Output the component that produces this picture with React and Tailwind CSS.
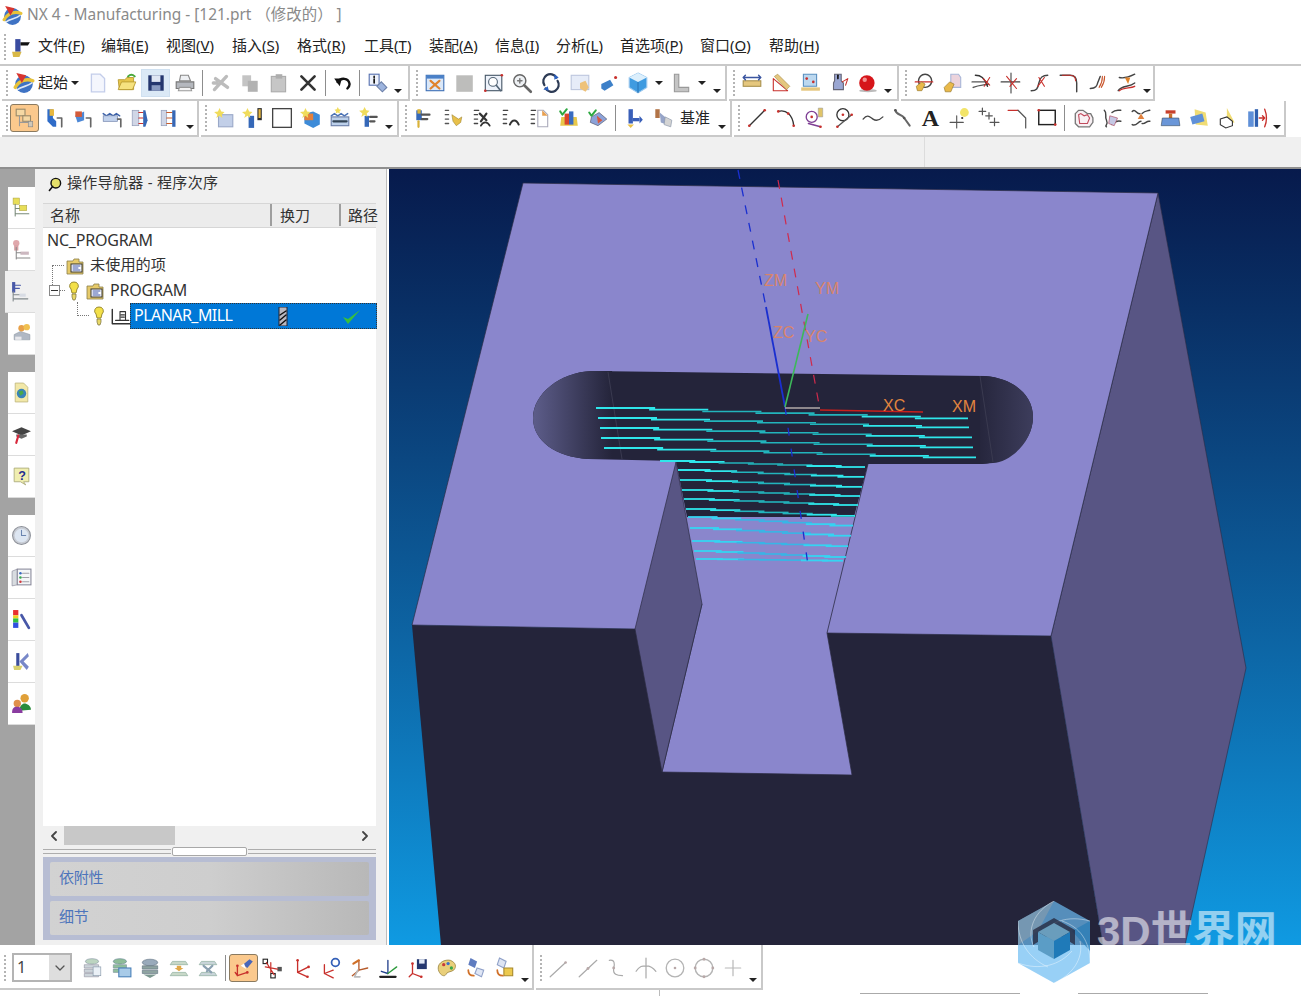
import React from 'react'

const UI = { fontFamily: '"Noto Sans", "Noto Sans CJK SC", sans-serif' }

// tiny drawing helpers for the 20x20 toolbar icons
const P = ({ d, c = '#444', w = 1.3, f = 'none', o = 1 }) => (
  <path d={d} stroke={c} strokeWidth={w} fill={f} opacity={o} strokeLinecap="round" strokeLinejoin="round" />
)
const Dot = ({ x, y, r = 1.2, c = '#c8302c' }) => <circle cx={x} cy={y} r={r} fill={c} />
const Ic = ({ children, s = 22 }) => (
  <svg width={s} height={s} viewBox="0 0 20 20" className="shrink-0">{children}</svg>
)

const RED = '#c8302c'

const I = {
  logo: <><circle cx="10" cy="11" r="8" fill="#3f73c4" /><P d="M2 14C6 7 13 6 18 8" c="#e8c33a" w={3} /><P d="M4 16C8 13 14 13 17 10" c="#dfe8f5" w={1.5} /><path d="M3 1l9 2-4 7z" fill="#d8352f" /></>,
  newf: <path d="M4 2h8l4 4v12H4z" fill="#f4f6fd" stroke="#c3cdea" strokeWidth="1.2" />,
  open: <><path d="M2 7h6l2-2h6v11H3z" fill="#e8c74c" stroke="#b79a30" strokeWidth=".8" /><path d="M2 16l3-7h13l-3 7z" fill="#f6e27f" stroke="#b79a30" strokeWidth=".8" /><P d="M11 4c2-2 4-2 6 0" c="#4aa83c" w={1.8} /></>,
  save: <><rect x="3" y="3" width="14" height="14" fill="#24366e" /><rect x="6" y="3" width="8" height="6" fill="#dfe6f3" /><rect x="6" y="12" width="8" height="5" fill="#8899c0" /></>,
  print: <><path d="M6 3h7l2 5H5z" fill="#eef0f3" stroke="#888" /><path d="M2 9h16v6H2z" fill="#b5b8be" stroke="#777" /><path d="M5 14h10l1 3H4z" fill="#f4f4f4" stroke="#999" /></>,
  cut: <P d="M4 16L15 4M5 6l11 8M3 10h3" c="#bcbcbc" w={3} />,
  copy: <><rect x="3" y="3" width="8" height="10" fill="#c4c4c4" /><rect x="8" y="8" width="9" height="10" fill="#b2b2b2" /></>,
  paste: <><rect x="3" y="4" width="13" height="14" fill="#c6c6c6" stroke="#aaa" /><rect x="7" y="2" width="6" height="4" fill="#adadad" /></>,
  del: <P d="M4 4l12 12M16 4L4 16" c="#333" w={2.4} />,
  undo: <><P d="M5 9c3-4 10-4 11 2 0 2-1 3-2 4" c="#111" w={2.2} /><path d="M2 6l7 0-2 7z" fill="#111" /></>,
  info: <><rect x="2" y="2" width="9" height="10" fill="#eef2fb" stroke="#5570b0" /><P d="M6.500 4v1M6.500 6.500V10" c="#111" w={1.5} /><path d="M9 13l4-4 5 5-4 4z" fill="#9db4de" stroke="#6b7fa8" /></>,
  fit: <><rect x="2" y="3" width="16" height="14" fill="#dbe8f8" stroke="#3e6fb5" /><rect x="2" y="3" width="16" height="3" fill="#4a80c8" /><P d="M6 8l8 7M14 8l-8 7" c="#e0832c" w={2} /></>,
  gray: <rect x="3" y="3" width="15" height="15" fill="#bdbdbb" />,
  zoomb: <><rect x="3" y="3" width="15" height="14" fill="#eef3fb" stroke="#456" /><circle cx="10" cy="9" r="4" fill="#fff" stroke="#567" /><P d="M13 12l4 5" c="#567" w={1.5} /><Dot x="3" y="17" /><Dot x="18" y="3" /></>,
  zoom: <><circle cx="8" cy="8" r="5.500" fill="#eef1f4" stroke="#666" strokeWidth="1.3" /><P d="M6 8h4M8 6v4" c="#777" /><P d="M12 12l6 6" c="#666" w={2.4} /></>,
  rot: <><P d="M4 12A6.500 6.500 0 0 1 15 5" c="#2d3b55" w={2} /><P d="M16 8A6.500 6.500 0 0 1 5 15" c="#2d3b55" w={2} /><path d="M13 2l4 3-4 2z" fill="#2a60c0" /><path d="M7 13l-4 3 5 1z" fill="#2a60c0" /></>,
  pan: <><rect x="2" y="3" width="16" height="13" fill="#e6ecf8" stroke="#bcc6dd" /><path d="M10 10l5-2 3 6-3 4-5-3z" fill="#eec27a" /></>,
  shade: <><path d="M3 11l8-4 3 5-8 5-3-2z" fill="#3d80c8" /><Dot x="16" y="5" r="1.4" /></>,
  cube: <><path d="M10 1l8 4v9l-8 5-8-5V5z" fill="#3f9be0" stroke="#9cc8ee" /><path d="M2 5l8 4 8-4-8-4z" fill="#dceffc" /><path d="M10 9v10" stroke="#2a76b8" /></>,
  csys: <path d="M4 2h4v12h9v4H4z" fill="#c4c4c4" stroke="#999" />,
  meas: <><rect x="2" y="8" width="16" height="5" fill="#e5c77e" stroke="#a8904d" /><P d="M2 5h16M4 3l-2 2 2 2M16 3l2 2-2 2" c="#3a55a0" /></>,
  angle: <><P d="M3 17V6L16 17z" c={RED} w={1} /><path d="M4 4l3-2 11 11-3 3z" fill="#e5c77e" stroke="#a8904d" strokeWidth=".6" /></>,
  sect: <><path d="M4 2h12v11H4z" fill="#bcd8ef" stroke="#5a90c0" /><rect x="2" y="14" width="17" height="3" fill="#e5c77e" /><Dot x="7" y="6" /><Dot x="13" y="9" /></>,
  analy: <><path d="M6 2h6v6l2 2v6H5v-6l1-2z" fill="#9aa6d2" stroke="#667" /><P d="M9 3v3" c="#111" w={1.5} /><P d="M13 9l5-3-2 6" c={RED} w={1} /></>,
  ball: <><ellipse cx="10" cy="17" rx="8" ry="1.500" fill="#bbb" /><circle cx="9" cy="10" r="7" fill="#d6151a" /><circle cx="7" cy="7" r="2" fill="#f28f8f" /></>,
  hand: <><circle cx="11" cy="8" r="6" fill="#fff" stroke="#444" strokeWidth="1.3" /><P d="M2 9h16" c={RED} w={1} /><path d="M3 13l5-4 3 2-3 6H4z" fill="#e9b94a" stroke="#96772a" strokeWidth=".6" /></>,
  hand2: <><path d="M8 2h7l2 3v9H8z" fill="#ecd3dc" stroke="#a9b6d8" /><path d="M2 14l5-5 4 2-3 7H3z" fill="#e9b94a" stroke="#96772a" strokeWidth=".6" /></>,
  trim1: <><P d="M1 9h14M2 14c5-2 9-2 14-3" c="#555" /><P d="M4 3c5 0 8 2 11 10" c="#333" /><P d="M11 6l6 6M17 5l-5 8" c={RED} w={1} /></>,
  trim2: <><P d="M10 1v18M1 9h17" c="#444" w={1} /><P d="M6 4l9 11M15 6l-6 7" c={RED} w={1} /></>,
  trim3: <><P d="M2 17c5 0 6-2 7-7s3-7 8-7" c="#444" /><P d="M9 5l5 8M14 5l-6 8" c={RED} w={1} /></>,
  fillet: <><P d="M2 3h9c4 0 6 3 6 7v8" c="#444" /><P d="M4 3h7c3 0 5 2 5 5" c={RED} w={1} /></>,
  offs: <><P d="M3 15c5 0 6-2 7-6l2-5" c="#444" /><P d="M13 14c2-3 3-6 3-10M11 14c2-3 3-6 3-10" c="#c8552c" w={1} /></>,
  blend: <><P d="M2 17c3-5 10-3 15-7M3 5c4 1 8 0 14-3" c="#444" /><P d="M3 17c4-3 10-2 14-4" c={RED} w={1.2} /><path d="M8 5h5l-2 6z" fill="#e0832c" /></>,
  mach: <><rect x="2" y="2" width="8" height="6" fill="#f5d8a4" stroke="#9a8a6a" /><rect x="8" y="8" width="7" height="5" fill="#f5d8a4" stroke="#9a8a6a" /><P d="M5 8v9M5 14h8" c="#999" w={1} /><rect x="13" y="13" width="4" height="5" fill="#d0c8b8" stroke="#888" strokeWidth=".6" /></>,
  tool: <><path d="M4 2h5v8l3 3v5H9l-5-5z" fill="#2f6cc8" /><rect x="6" y="2" width="4" height="6" fill="#e8b83f" /><P d="M13 10h4v8" c="#666" w={1.5} /></>,
  geom: <><path d="M3 8l8-4v8l-6 2z" fill="#4d88d6" /><path d="M3 4h6v5H3z" fill="#d45b3a" /><P d="M13 10h4v8" c="#666" w={1.5} /></>,
  meth: <><P d="M2 6l3 2 3-2 3 2 3-2 3 2" c="#3a60a8" /><rect x="2" y="8" width="13" height="5" fill="#c2d2ec" stroke="#6a7ea8" strokeWidth=".6" /><P d="M15 11h3v7" c="#666" w={1.5} /></>,
  prog: <><rect x="2" y="3" width="6" height="14" fill="#d0d6e6" stroke="#8c97b3" strokeWidth=".6" /><P d="M8 5h4M8 10h4M8 15h4" c={RED} w={1} /><path d="M12 3h2l2 9-2 6h-2z" fill="#3767b5" /></>,
  prog2: <><rect x="2" y="3" width="5" height="14" fill="#d0d6e6" stroke="#8c97b3" strokeWidth=".6" /><P d="M7 5h5M7 10h5M7 15h5" c="#c85c2c" w={1} /><path d="M12 3h3v15h-3z" fill="#3767b5" /></>,
  cProg: <><rect x="5" y="7" width="13" height="11" fill="#c2cfe8" stroke="#9aa8c8" /><path d="M6 1l1.500 3 3 .5L8 7l.5 3L6 8 3 10l1-3-3-2.500 3.500-.5z" fill="#f0dc5c" /></>,
  cTool: <><path d="M6 8h5v11H6z" fill="#3568b8" /><path d="M14 1h4v11h-4z" fill="#2c2c2c" /><rect x="15" y="2" width="2" height="8" fill="#e8b83f" /><path d="M5 1l1.500 3 3 .5L7 7l.5 3L5 8 2 10l1-3-3-2.500 3.500-.5z" fill="#f0dc5c" /></>,
  square: <rect x="1.500" y="1.500" width="17" height="17" fill="#fff" stroke="#444" strokeWidth="1.2" />,
  cGeom: <><path d="M4 6l8-2 6 3v9l-6 3-8-4z" fill="#3d8bd8" /><path d="M4 6h8v6H4z" fill="#e5803a" /><path d="M5 1l1.500 3 3 .5L7 7l.5 3L5 8 2 10l1-3-3-2.500 3.500-.5z" fill="#f0dc5c" /></>,
  cMeth: <><rect x="2" y="9" width="16" height="8" fill="#bcd0ea" stroke="#6a7ea8" /><P d="M4 13h12" c="#345" w={2} /><P d="M2 8l3-2 3 2 3-2 3 2 3-2" c="#4a72b5" /><path d="M8 0l1 2 2 .5-1.500 1.500.5 2-2-1-2 1 .5-2L5 2.500 7 2z" fill="#f0dc5c" /></>,
  cOper: <><path d="M6 8h4v10H6z" fill="#3568b8" /><P d="M11 9h6M11 13h4" c="#555" w={2} /><path d="M6 0l1.500 3 3 .5L8 6l.5 3L6 7 3 9l1-3-3-2.500 3.500-.5z" fill="#f0dc5c" /></>,
  opA: <><path d="M3 3h5v9H3z" fill="#3568b8" /><rect x="4" y="2" width="3" height="4" fill="#d9b23a" /><P d="M8 7h7M8 11h5" c="#555" w={2} /><P d="M5 13v5" c="#d9b23a" w={2} /></>,
  list1: <><P d="M3 3h3M3 7h3M3 11h3M3 15h3" c="#555" w={1.2} /><path d="M9 7l6 4 3-2-1 5-4 3-3-4z" fill="#e8c04a" stroke="#98802e" strokeWidth=".5" /></>,
  list2: <><P d="M3 3h4M3 7h3M3 11h3M3 15h3" c="#444" w={1.2} /><P d="M8 6l6 6M14 6l-5 7" c="#333" w={2} /><P d="M9 17c2-4 6-4 8 0" c="#333" w={1.6} /></>,
  list3: <><P d="M3 3h4M3 7h3M3 11h3M3 15h3" c="#444" w={1.2} /><P d="M9 16c2-5 6-5 8 0" c="#333" w={1.8} /></>,
  list4: <><P d="M2 3h4M2 7h3M2 11h3M2 15h3" c="#444" w={1.2} /><path d="M8 3h5l4 4v11H8z" fill="#fff" stroke="#aab" /><path d="M12 3l5 5h-5z" fill="#e8a050" /></>,
  ver1: <><path d="M3 9h14l1 8H2z" fill="#e8c84a" /><rect x="6" y="6" width="4" height="10" fill="#d8452c" /><rect x="10" y="4" width="4" height="12" fill="#3a6cc0" /><P d="M2 4l2 3 4-5" c="#2da840" w={1.8} /></>,
  ver2: <><path d="M4 9l7-4 7 6-8 6-7-3z" fill="#8ca2d8" stroke="#445" strokeWidth=".5" /><path d="M9 8l5 4-4 3z" fill="#d8583c" /><P d="M2 5l2 3 4-5" c="#2da840" w={1.8} /></>,
  wcs: <><path d="M5 2h4v13H5z" fill="#3a5fb8" /><path d="M9 10h6v3H9z" fill="#3a5fb8" /><path d="M15 8l3 3.500-3 3.500z" fill="#3a5fb8" /><path d="M4 16h6l-3 3z" fill="#e8c04a" /></>,
  wcs2: <><path d="M3 2h4v8H3z" fill="#b27447" /><path d="M7 5l6 5v6l-5-2z" fill="#96a4c8" /><path d="M12 9l6 3-1 6-6-2z" fill="#d4d4d4" stroke="#8894a8" strokeWidth=".6" /></>,
  line: <><P d="M3 17L17 3" c="#333" w={1.2} /><Dot x="3" y="17" /><Dot x="17" y="3" /></>,
  arc: <><P d="M3 4c7-2 13 3 14 13" c="#333" w={1.2} /><Dot x="3" y="4" /><Dot x="17" y="17" /><Dot x="12" y="6" /></>,
  circ: <><circle cx="7" cy="9" r="5" fill="none" stroke="#7e3e94" strokeWidth="1.200" /><Dot x="7" y="9" /><path d="M13 1h4v8h-4z" fill="#e0c468" stroke="#999" strokeWidth=".5" /><P d="M4 15l11 3" c="#7e3e94" /><Dot x="15" y="18" /></>,
  circ2: <><circle cx="9" cy="7" r="5.500" fill="none" stroke="#333" strokeWidth="1.200" /><Dot x="9" y="7" /><P d="M4 18L17 7" c="#555" w={1.2} /><Dot x="4" y="18" /><Dot x="17" y="7" /></>,
  spline: <P d="M1 11c4-5 6-2 9 0s6 1 9-2" c="#444" w={1.2} />,
  stud: <><P d="M4 3c1 5 6 3 8 7l5 7" c="#666" w={1.8} /><Dot x="4" y="3" r="1.200" c="#555" /><Dot x="12" y="10" r="1.200" c="#555" /></>,
  plus: <><P d="M1 14h12M7 8v11" c="#555" w={1} /><circle cx="14" cy="5" r="4" fill="#f2e469" /><Dot x="12" y="10" r="1" c="#333" /></>,
  plusn: <P d="M4 1v6M1 4h6M10 5v6M7 8h6M15 10v7M11 14h8" c="#555" w={1.1} />,
  corner: <><P d="M1 3h9" c="#c8302c" w={1.1} /><P d="M10 3l7 7v9" c="#555" w={1.1} /></>,
  rect: <><rect x="2.500" y="3" width="15" height="13" fill="none" stroke="#222" strokeWidth="1.300" /><Dot x="2.500" y="3" /><Dot x="17.500" y="16" /></>,
  heart: <><path d="M3 6l3-3h4l4 3h3l2 4v4l-3 4H6l-3-3z" fill="#f8f0f3" stroke="#777" strokeWidth="1.200" /><path d="M6 7l2-1 3 2 3-1 2 3-2 5H7z" fill="none" stroke="#c04a5c" /></>,
  curve1: <><P d="M3 3c3 3 0 5 2 9s-2 5 0 6M10 5c3-3 5-2 8-2M10 16c3-3 5-4 8-3" c="#444" /><path d="M8 8l7 2-3 7-5-2z" fill="#c5c8e4" stroke="#b04a60" strokeWidth=".6" /></>,
  curve2: <><P d="M2 4c3-3 4 3 7 2M2 16c4 2 5-3 8-3M11 6c3-3 4-2 7-3M11 15c3 1 4-3 7-2" c="#444" /><path d="M10 6l3 5h-6z" fill="#e0803c" /></>,
  surf1: <><path d="M6 3h9v3H6z" fill="#c8402c" /><path d="M9 6h3v4H9z" fill="#c8702c" /><path d="M3 10h15l1 7H2z" fill="#6a96d8" stroke="#345" strokeWidth=".5" /></>,
  surf2: <><path d="M6 2l10 3 2 12-11-1z" fill="#f0dc74" /><path d="M2 9l11-3 2 7-11 3z" fill="#5f90d8" /></>,
  surf3: <><path d="M9 1l7 13-7 1z" fill="#f0dc74" /><path d="M3 11l6-2 5 4v4l-6 2-5-3z" fill="#fff" stroke="#333" /></>,
  xform: <><rect x="2" y="4" width="5" height="14" fill="#5f90d8" /><rect x="8" y="2" width="3" height="16" fill="#2f60b0" /><P d="M12 10h5M15 8l2 2-2 2M17 2c2 5 2 11 0 16" c={RED} w={1.2} /></>,
  layers1: <><ellipse cx="10" cy="4" rx="6" ry="2.500" fill="#bcd4c0" stroke="#789" strokeWidth=".5" /><path d="M3 7h13v3H3zM3 11h13v3H3zM3 15h13v3H3z" fill="#ccd4da" stroke="#889" strokeWidth=".5" /><rect x="11" y="9" width="7" height="8" fill="#eaf0f6" stroke="#89a" strokeWidth=".6" /></>,
  layers2: <><ellipse cx="9" cy="4" rx="6" ry="2.500" fill="#8ebc98" stroke="#578" strokeWidth=".5" /><path d="M3 7h12v3H3zM3 11h12v3H3z" fill="#8fbf9c" stroke="#789" strokeWidth=".5" /><rect x="8" y="10" width="11" height="8" fill="#a8cbe8" stroke="#4a80b8" /></>,
  layers3: <><ellipse cx="10" cy="5" rx="7" ry="3" fill="#9ab" stroke="#567" strokeWidth=".5" /><path d="M3 8h14v3H3zM3 12h14v3H3z" fill="#8ea3a0" stroke="#567" strokeWidth=".5" /><path d="M4 16h12l-6 3z" fill="#7c9890" /></>,
  layers4: <><path d="M4 4h12l2 3H2zM4 14h12l2 3H2z" fill="#c8d8c8" stroke="#8a9" strokeWidth=".6" /><path d="M8 8h4v2h2l-4 3-4-3h2z" fill="#e0a848" /></>,
  layers5: <><path d="M4 4h12l2 3H2zM4 14h12l2 3H2z" fill="#c8d4d8" stroke="#8a9" strokeWidth=".6" /><P d="M6 8l7 6M14 8l-5 5" c="#8aa0b0" w={2} /></>,
  csFlash: <><P d="M4 8v9l9-3M4 17l-2-3" c={RED} w={1.2} /><Dot x="4" y="8" /><Dot x="13" y="14" /><path d="M9 7l6-5 3 2-5 6z" fill="#4a66b8" /><path d="M7 8l3-2 2 5z" fill="#fff" /></>,
  csSq: <><rect x="1" y="2" width="4" height="4" fill="#fff" stroke="#222" /><rect x="14" y="9" width="4" height="4" fill="#555" /><rect x="8" y="15" width="4" height="4" fill="#fff" stroke="#222" /><P d="M4 5l7 11M3 9l11 2M8 5v9" c={RED} w={1.1} /></>,
  cs: <><P d="M6 3v11l10-5M6 14l9 4" c={RED} w={1.2} /><Dot x="6" y="3" /><Dot x="16" y="9" /><Dot x="15" y="18" /></>,
  csRot: <><P d="M4 7v8l8-3M4 15l8 4" c={RED} w={1.2} /><circle cx="14" cy="5" r="3.500" fill="none" stroke="#3460b8" strokeWidth="1.600" /></>,
  csGray: <><P d="M9 3v9l8-2M9 12l-6 5" c="#b65a2a" w={1.2} /><P d="M4 6l5-3" c="#d07028" w={2} /><P d="M8 12l-3 6h5" c="#bbb" w={1.5} /></>,
  csAxis: <><P d="M9 3v12M9 15l-6-2" c="#22408c" w={1.2} /><P d="M9 15l8-6" c="#2d9a3c" w={1.2} /><P d="M2 18h14" c="#222" w={2} /></>,
  csSave: <><P d="M5 6v9l8 3M5 15l-3 3" c={RED} w={1.2} /><Dot x="5" y="6" /><Dot x="13" y="18" /><rect x="9" y="2" width="9" height="9" fill="#24366e" /><rect x="11" y="2" width="5" height="4" fill="#dfe6f3" /></>,
  palette: <><path d="M2 10c0-5 6-8 11-7 5 2 6 6 3 9-3 2-6 1-7 4-2 3-7-1-7-6z" fill="#e9cf7a" stroke="#96803a" strokeWidth=".7" /><Dot x="7" y="7" r="1.500" c="#c83a3a" /><Dot x="11" y="6" r="1.500" c="#3a70c8" /><Dot x="14" y="10" r="1.500" c="#3aa84a" /></>,
  swapA: <><path d="M5 1l6 3-2 6-6-3z" fill="#5f7cc0" /><path d="M11 10l6 2-2 6-6-3z" fill="#dfe6f5" stroke="#8fa0c8" /><P d="M3 12c0 3 2 5 5 5" c="#d07028" w={1.6} /></>,
  swapB: <><path d="M5 1l6 3-2 6-6-3z" fill="#dde4f3" stroke="#8fa0c8" /><path d="M9 10h8v7H9z" fill="#ecc94e" stroke="#a8892c" /><P d="M3 12c0 3 2 5 5 5" c="#d07028" w={1.6} /></>,
  gLine: <><P d="M2 18L16 5" c="#aaa" w={1.1} /><Dot x="16" y="5" r="1.200" c="#b8a8a8" /></>,
  gLine2: <><P d="M2 18L18 3" c="#aaa" w={1.1} /><Dot x="10" y="10.500" r="1.300" c="#b8a8a8" /></>,
  gCurve: <><P d="M3 3c5-1 5 3 4 7-1 6 3 7 8 7" c="#aaa" w={1.1} /><Dot x="7" y="10" r="1.300" c="#b8a8a8" /></>,
  gFork: <P d="M10 1v18M1 13c3-5 6-5 9-5s6 1 9 5" c="#aaa" w={1.1} />,
  gCirc: <><circle cx="10" cy="10" r="8" fill="none" stroke="#b4b4b4" strokeWidth="1.200" /><Dot x="10" y="10" r="1.200" c="#b8a8a8" /></>,
  gCirc2: <><circle cx="10" cy="10" r="8" fill="none" stroke="#b4b4b4" strokeWidth="1.300" /><Dot x="10" y="2" r="1.300" c="#b8a8a8" /><Dot x="2" y="10" r="1.300" c="#b8a8a8" /><Dot x="18" y="10" r="1.300" c="#b8a8a8" /><Dot x="10" y="18" r="1.300" c="#b8a8a8" /></>,
  gPlus: <P d="M10 3v14M3 10h14" c="#b8b8b8" w={1.1} />,
}

const Grip = () => <div className="w-[3px] h-[26px] mr-[1px] border-l-2 border-dotted border-[#b4b4b4] shrink-0" />
const Sep = () => <div className="w-px h-[26px] mx-[3px] bg-[#8d8d8d] shrink-0" />
const Caret = () => <span className="block w-0 h-0 border-x-[4px] border-x-transparent border-t-[4px] border-t-[#222] shrink-0" />
const Chev = () => (
  <div className="w-[12px] h-full flex items-end justify-center pb-[6px] shrink-0">
    <Caret />
  </div>
)

function Btn({ name, state, w }) {
  const box = state === 'on'
    ? 'bg-[#fbc98d] border border-[#8a7a60] rounded-[3px]'
    : state === 'hover'
      ? 'bg-[#dbe9f6] border border-[#cfe0f0]'
      : 'border border-transparent'
  return (
    <div className={`h-[28px] flex items-center justify-center shrink-0 ${w || 'w-[29px]'} ${box}`}>
      <Ic>{I[name]}</Ic>
    </div>
  )
}

function Bar({ children, className }) {
  return (
    <div className={`h-full flex items-center pl-[4px] pr-[2px] border-r-2 border-b-2 border-[#c9c9c9] bg-white shrink-0 ${className || ''}`}>
      <Grip />
      {children}
    </div>
  )
}

const many = (names) => names.map((n, i) => <Btn key={i} name={n} />)

function Menu({ label, k, w }) {
  return (
    <div className={`text-[15px] pb-[4px] text-[#222] whitespace-nowrap shrink-0 ${w}`}>
      {label}(<span className="underline">{k}</span>)
    </div>
  )
}

const MENUS = [
  ['文件', 'F', 'w-[63px]'], ['编辑', 'E', 'w-[65px]'], ['视图', 'V', 'w-[66px]'], ['插入', 'S', 'w-[65px]'],
  ['格式', 'R', 'w-[67px]'], ['工具', 'T', 'w-[65px]'], ['装配', 'A', 'w-[66px]'], ['信息', 'I', 'w-[61px]'],
  ['分析', 'L', 'w-[64px]'], ['首选项', 'P', 'w-[80px]'], ['窗口', 'O', 'w-[69px]'], ['帮助', 'H', 'w-[70px]'],
]

const DOCK = [
  { items: ['t1', 't2', 't3', 't4'] },
  { items: ['t5', 't6', 't7'] },
  { items: ['t8', 't9', 't10', 't11', 't12'] },
]

const T = {
  t1: <><rect x="2" y="1" width="6" height="6" fill="#e8de58" stroke="#a8a040" strokeWidth=".5" /><rect x="8" y="8" width="7" height="5" fill="#e8de58" stroke="#a8a040" strokeWidth=".5" /><P d="M4 7v11M4 11h4M4 16h13" c="#7a8a7a" w={1} /></>,
  t2: <><circle cx="5" cy="4" r="3" fill="#e0a8ac" /><rect x="3" y="6" width="4" height="5" fill="#d8a0a4" /><rect x="9" y="12" width="8" height="3" fill="#ccb8c0" /><P d="M5 8v11M5 13h4M5 18h13" c="#8a8a8a" w={1} /></>,
  t3: <><rect x="2" y="1" width="3" height="10" fill="#4858a8" /><P d="M5 4h5M5 7h4" c="#4858a8" w={1} /><P d="M3 10v9M3 13h6M3 17h14" c="#80888a" w={1} /><rect x="9" y="12" width="6" height="3" fill="#d8dce4" /></>,
  t4: <><path d="M3 11l6-3 9 3v5H3z" fill="#b0b8c4" stroke="#8a94a0" strokeWidth=".5" /><circle cx="10" cy="5" r="3" fill="#e8a048" /><circle cx="15" cy="4" r="3" fill="#f0c050" /><rect x="4" y="13" width="6" height="3" fill="#e8e8ec" /></>,
  t5: <><path d="M4 1h8l4 4v14H4z" fill="#f2e8a8" stroke="#c0b880" strokeWidth=".8" /><circle cx="10" cy="11" r="4.500" fill="#3a84b8" /><path d="M7 9l4-1 1 3-3 2z" fill="#4aa84a" /></>,
  t6: <><path d="M1 7l9-4 9 4-9 4z" fill="#444" /><path d="M5 10h10v2l-5 2-5-2z" fill="#666" /><P d="M7 11l-2 7" c="#d8283c" w={2} /></>,
  t7: <><path d="M3 2h14v13h-5l2 3-5-3H3z" fill="#f0eeb0" stroke="#a8a878" strokeWidth=".8" /><text x="7" y="13" fontSize="12" fontWeight="700" fill="#1f2f90" fontFamily="Liberation Sans">?</text></>,
  t8: <><circle cx="10" cy="10" r="8.500" fill="#c8ccd4" stroke="#8c9098" /><circle cx="10" cy="10" r="6.500" fill="#dde6f2" /><P d="M10 5v5h4" c="#6a84b0" w={1} /></>,
  t9: <><path d="M1 4l5-2v15l-5 1z" fill="#d8dce0" stroke="#889" strokeWidth=".6" /><rect x="6" y="2" width="13" height="15" fill="#f4f6f8" stroke="#889" /><Dot x="9" y="6" c="#3a68c0" /><Dot x="9" y="10" c="#38a850" /><Dot x="9" y="14" c="#d0383c" /><P d="M11 6h6M11 10h6M11 14h6" c="#a0a0a8" w={1} /></>,
  t10: <><rect x="2" y="1" width="5" height="5" fill="#e83030" /><rect x="2" y="6" width="5" height="3" fill="#f0d020" /><rect x="2" y="9" width="5" height="4" fill="#30c040" /><rect x="2" y="13" width="5" height="5" fill="#3050e0" /><P d="M10 6l7 12" c="#4858a8" w={2.600} /></>,
  t11: <><path d="M5 2h3v15H5z" fill="#3a4c9c" /><path d="M8 10l8-8 1 3-5 5 5 5-2 3z" fill="#7888c8" /><path d="M2 14h9l-2 4H3z" fill="#d8d070" /></>,
  t12: <><circle cx="13" cy="5" r="4" fill="#e0a038" /><path d="M8 17c0-5 3-7 5-7s6 2 6 6z" fill="#2a8c3c" /><circle cx="6" cy="10" r="3.500" fill="#e0904c" /><path d="M1 19c0-5 2-6 5-6s5 2 5 6z" fill="#8a3ca0" /></>,
}

function LeftDock() {
  return (
    <div className="w-[35px] shrink-0 bg-[#a3a3a3] pt-[18px] flex flex-col gap-[17px]">
      {DOCK.map((g, gi) => (
        <div key={gi} className="flex flex-col items-end">
          {g.items.map((t) => (
            <div
              key={t}
              className={`h-[42px] flex items-center justify-center border-b border-[#dcdcdc] ${t === 't3' ? 'w-[30px] bg-[#f0f0f0]' : 'w-[27px] bg-white'}`}
            >
              <Ic s={21}>{T[t]}</Ic>
            </div>
          ))}
        </div>
      ))}
    </div>
  )
}

const Folder = () => (
  <Ic s={20}>
    <path d="M2 5h6l1-2h5v3h4v12H2z" fill="#e6ca6a" stroke="#8b7f4a" strokeWidth=".8" />
    <rect x="6" y="8" width="11" height="8" fill="#fff" stroke="#333" strokeWidth="1" />
    <P d="M8 10h7M8 12h5M8 14h7" c="#3a52a8" w={1} />
  </Ic>
)
const Bulb = () => (
  <Ic s={20}>
    <path d="M10 1a4 4 0 0 1 3 7l-1 4H8L7 8a4 4 0 0 1 3-7z" fill="#f3e049" stroke="#8f7f28" strokeWidth=".9" />
    <path d="M8 13h4v3l-1 3H9l-1-3z" fill="#e8d868" stroke="#776f3a" strokeWidth=".7" />
  </Ic>
)

function OperationNav() {
  return (
    <div className="w-[352px] shrink-0 bg-[#f0f0f0] flex flex-col pl-[8px] pr-[10px] border-r border-[#bdbdbd]">
      <div className="h-[30px] mb-[4px] flex items-center gap-[4px] pl-[4px] shrink-0">
        <Ic s={16}>
          <ellipse cx="11" cy="9" rx="6" ry="6" fill="#e5e06a" stroke="#111" strokeWidth="1.800" />
          <P d="M7 13l-4 5" c="#111" w={2} />
        </Ic>
        <span className="text-[15px] pb-[4px] tracking-[0.3px] text-[#333] whitespace-pre">操作导航器 - 程序次序</span>
      </div>

      <div className="h-[25px] flex text-[15px] pb-[1px] text-[#333] shrink-0 bg-[#ececec] border-y border-[#d6d6d6]">
        <div className="w-[229px] pl-[7px] flex items-center border-r-2 border-[#9e9e9e]">名称</div>
        <div className="w-[69px] pl-[8px] flex items-center border-r-2 border-[#9e9e9e]">换刀</div>
        <div className="w-[34px] pl-[7px] flex items-center whitespace-nowrap">路径</div>
      </div>

      <div className="flex-1 bg-white text-[16px] tracking-[-0.2px] text-[#333] min-h-0">
        <div className="h-[25px] flex items-center pl-[4px] pb-[2px]">NC_PROGRAM</div>
        <div className="relative h-[25px] flex items-center pl-[22px]">
          <span className="absolute left-[9px] top-[12px] w-[12px] border-t border-dotted border-[#777]" />
          <span className="absolute left-[9px] top-[12px] h-[26px] border-l border-dotted border-[#777]" />
          <Folder />
          <span className="ml-[5px] pb-[2px] text-[15.200px] tracking-normal">未使用的项</span>
        </div>
        <div className="relative h-[25px] flex items-center pl-[21px]">
          <span className="absolute left-[6px] top-[7px] w-[11px] h-[11px] bg-white border border-[#888] flex items-center justify-center">
            <span className="w-[7px] border-t border-[#333]" />
          </span>
          <span className="absolute left-[17px] top-[12px] w-[5px] border-t border-dotted border-[#777]" />
          <span className="absolute left-[34px] top-[24px] h-[14px] border-l border-dotted border-[#777]" />
          <Bulb />
          <span className="ml-[1px]"><Folder /></span>
          <span className="ml-[5px] pb-[2px]">PROGRAM</span>
        </div>
        <div className="relative h-[25px] flex items-center pl-[46px]">
          <span className="absolute left-[34px] top-[12px] w-[12px] border-t border-dotted border-[#777]" />
          <Bulb />
          <Ic s={22}>
            <P d="M3 4v13h18" c="#333" w={1.3} />
            <P d="M6 14h12M10 14V6h5v8M11 9h3M11 11h3" c="#333" w={1} />
          </Ic>
          <div className="absolute left-[87px] top-0 w-[247px] h-[26px] bg-[#0078d7] border border-dotted border-[#333] flex items-center text-white">
            <span className="pl-[3px] pb-[2px] tracking-[-0.55px]">PLANAR_MILL</span>
            <span className="absolute left-[147px] top-[3px]">
              <svg width="10" height="19" viewBox="0 0 10 19" className="block">
                <rect x="1" y="0" width="8" height="19" fill="#b8b8c0" stroke="#223" />
                <P d="M2 8l6-4M2 13l6-5M2 18l6-5" c="#111" w={1.5} />
              </svg>
            </span>
            <span className="absolute left-[211px] top-[4px]">
              <svg width="19" height="17" viewBox="0 0 19 17" className="block">
                <path d="M1 9l5 7L18 2 6 11z" fill="#38c03c" />
              </svg>
            </span>
          </div>
        </div>
      </div>

      <div className="h-[19px] flex items-center shrink-0">
        <div className="w-[21px] flex justify-center text-[#444]">
          <svg width="10" height="10" viewBox="0 0 10 10"><P d="M7 1L3 5l4 4" c="#444" w={1.8} /></svg>
        </div>
        <div className="w-[111px] h-[19px] bg-[#c8c8c8]" />
        <div className="flex-1" />
        <div className="w-[22px] flex justify-center">
          <svg width="10" height="10" viewBox="0 0 10 10"><P d="M3 1l4 4-4 4" c="#444" w={1.8} /></svg>
        </div>
      </div>

      <div className="h-[11px] flex items-center shrink-0 gap-px mt-[1px]">
        <div className="flex-1 h-[5px] border-y border-[#adadad]" />
        <div className="w-[75px] h-[9px] bg-white border border-[#a8a8a8] rounded-[2px]" />
        <div className="flex-1 h-[5px] border-y border-[#adadad]" />
      </div>

      <div className="shrink-0 bg-[#b7bdd3] px-[7px] py-[5px] flex flex-col gap-[5px] mb-[5px]">
        {['依附性', '细节'].map((t) => (
          <div key={t} className="h-[34px] rounded-[2px] bg-linear-to-r from-[#d2d2d2] via-[#cecece] to-[#b8b8b8] flex items-center pl-[9px] pb-[3px] text-[15px] tracking-[-0.2px] text-[#4d74bb]">
            {t}
          </div>
        ))}
      </div>
    </div>
  )
}

// toolpath passes: x1, y1, x2, y2 in screen coordinates
const PASSES = [
  [596, 408, 968, 420], [598, 418, 969, 429], [600, 428, 972, 439], [601, 438, 973, 449], [604, 448, 976, 459],
  [660, 461, 865, 468], [678, 470, 864, 478], [680, 480, 862, 488], [682, 490, 860, 497], [684, 499, 858, 506], [686, 509, 855, 517],
]
const FLOOR = [
  [688, 517, 853, 527], [690, 528, 851, 537], [692, 541, 848, 547], [694, 551, 846, 558], [696, 559, 843, 561],
]

// each pass is drawn as a stair of flat runs, brighter at both ends
function Passes({ list, base, hi }) {
  const steps = [0, 1, 2, 3, 4, 5, 6]
  return list.map(([x1, y1, x2, y2], i) => {
    const dx = (x2 - x1) / steps.length
    const dy = (y2 - y1) / steps.length
    return steps.map((k) => {
      const bright = k < 2 || k > 4
      return (
        <line
          key={`${i}-${k}`}
          x1={x1 + dx * k}
          y1={y1 + dy * k}
          x2={k === 6 ? x2 : x1 + dx * (k + 1) + 6}
          y2={y1 + dy * k}
          stroke={bright ? hi : base}
          strokeWidth={bright ? 1.8 : 1.6}
        />
      )
    })
  })
}

function Viewport() {
  const label = { fill: '#e2843f', fontSize: 16, fontFamily: 'Liberation Sans, sans-serif' }
  const faint = { ...label, fill: '#d8846a' }
  return (
    <div className="flex-1 ml-[2px] bg-linear-to-b from-[#071a4c] to-[#0f9ae2] min-w-0 overflow-hidden">
      <svg viewBox="389 169 912 776" className="w-full h-full block">
        <defs>
          <linearGradient id="capL" x1="533" x2="612" y1="0" y2="0" gradientUnits="userSpaceOnUse">
            <stop offset="0" stopColor="#5d5d8a" />
            <stop offset="1" stopColor="#24243a" />
          </linearGradient>
          <linearGradient id="capR" x1="975" x2="1033" y1="0" y2="0" gradientUnits="userSpaceOnUse">
            <stop offset="0" stopColor="#24243a" />
            <stop offset="1" stopColor="#3d3d5c" />
          </linearGradient>
        </defs>
        {/* body faces */}
        <polygon points="412,625 1051,636 1103,945 441,945" fill="#24243a" />
        <polygon points="1158,193 1246,668 1185,945 1103,945 1051,636" fill="#585584" stroke="#2c2c44" strokeWidth=".6" />
        <polygon points="523,183 1158,193 1051,636 827,633 852,775 662,772 702,604 635,629 412,625" fill="#8a86cc" stroke="#2c2c44" strokeWidth=".7" />
        <polygon points="676,462 635,629 662,772 702,604" fill="#585584" stroke="#2c2c44" strokeWidth=".7" />
        <line x1="868" y1="464" x2="827" y2="633" stroke="#2c2c44" strokeWidth=".8" />
        {/* slot */}
        <path d="M592 371L985 376C1012 378 1033 394 1033 417C1033 442 1010 462 982 464L868 464L854 517L687 517L676 461L588 459C556 457 533 441 533 418C533 394 560 372 592 371Z" fill="#24243a" />
        <path d="M592 371L612 371L622 459L588 459C556 457 533 441 533 418C533 394 560 372 592 371Z" fill="url(#capL)" />
        <path d="M980 376L985 376C1012 378 1033 394 1033 417C1033 442 1010 462 993 463L980 464Z" fill="url(#capR)" />
        <line x1="608" y1="372" x2="622" y2="459" stroke="#3a3a50" strokeWidth="1" />
        <line x1="980" y1="376" x2="993" y2="462" stroke="#3a3a50" strokeWidth="1" />
        {/* toolpath */}
        <Passes list={PASSES} base="#22b4bc" hi="#2fe6ea" />
        <Passes list={FLOOR} base="#37b6e6" hi="#35d4f2" />
        {/* axes */}
        <line x1="738" y1="170" x2="766" y2="307" stroke="#1a2fd0" strokeWidth="1.300" strokeDasharray="9 9" />
        <line x1="766" y1="307" x2="785" y2="407" stroke="#1a2fd0" strokeWidth="1.800" />
        <line x1="785" y1="407" x2="808" y2="565" stroke="#1a2fd0" strokeWidth="1.300" strokeDasharray="8 13" />
        <line x1="778" y1="180" x2="820" y2="410" stroke="#d02a4c" strokeWidth="1.200" strokeDasharray="9 9" />
        <line x1="785" y1="407" x2="808" y2="314" stroke="#3db85a" strokeWidth="1.600" />
        <line x1="785" y1="408" x2="820" y2="408" stroke="#b0a8a8" strokeWidth="1.300" />
        <line x1="820" y1="410" x2="923" y2="412" stroke="#c8201c" strokeWidth="1.300" />
        <text x="764" y="286" style={faint}>ZM</text>
        <text x="815" y="294" style={faint}>YM</text>
        <text x="773" y="338" style={faint}>ZC</text>
        <text x="805" y="342" style={faint}>YC</text>
        <text x="883" y="411" style={label}>XC</text>
        <text x="952" y="412" style={label}>XM</text>
      </svg>
    </div>
  )
}

function Watermark() {
  return (
    <>
      <svg width="72" height="82" viewBox="0 0 72 82" className="absolute left-[1018px] top-[901px]">
        <polygon points="36,0 72,20 72,62 36,82 0,62 0,20" fill="#6cbcf2" opacity=".7" />
        <polygon points="36,0 0,20 0,44 20,30" fill="#8f9fac" opacity=".55" />
        <polygon points="72,20 72,50 54,30" fill="#1f78b4" opacity=".6" />
        <path d="M36 0C16 10 8 30 16 46M72 20C50 14 30 20 20 38M72 62C72 40 62 26 44 20M36 82C54 74 66 58 62 40M0 62C22 70 42 64 54 50M0 20C0 42 12 58 30 66" fill="none" stroke="#fff" strokeWidth=".8" opacity=".5" />
        <polygon points="36,17 57,29 57,44 36,31 15,44 15,29" fill="#24243a" opacity=".75" />
        <polygon points="36,22 52,31 36,40 20,31" fill="#6a9dbc" />
        <polygon points="36,40 52,31 52,49 36,58" fill="#1f7ab8" />
        <polygon points="36,40 20,31 20,49 36,58" fill="#5b9dc6" />
      </svg>
      <div className="absolute left-[1097px] top-[902px] h-[46px] text-[42px] leading-[60px] font-bold text-white/55 whitespace-nowrap" style={{ fontFamily: '"Liberation Sans", "Noto Sans CJK SC", sans-serif' }}>
        3D世界网
      </div>
    </>
  )
}

export default function App() {
  return (
    <div className="relative w-[1301px] h-[996px] overflow-hidden bg-white flex flex-col" style={UI}>
      {/* title */}
      <div className="h-[30px] flex items-center gap-[4px] pl-[2px] shrink-0">
        <Ic s={21}>{I.logo}</Ic>
        <span className="text-[15.450px] text-[#8a8a8a] whitespace-pre">NX 4 - Manufacturing - [121.prt （修改的） ]</span>
      </div>

      {/* menu */}
      <div className="h-[34px] flex items-center pl-[4px] shrink-0 border-b-2 border-[#c9c9c9] box-content">
        <Grip />
        <div className="w-[24px] shrink-0 flex justify-center mr-[6px]">
          <Ic s={21}>
            <path d="M5 2h5v12H5z" fill="#3a4ca0" />
            <path d="M10 5h9l-2 3h-7z" fill="#111" />
            <path d="M2 14h9l-2 5H3z" fill="#d8b848" />
          </Ic>
        </div>
        {MENUS.map(([l, k, w]) => <Menu key={l} label={l} k={k} w={w} />)}
      </div>

      {/* toolbar row 1 */}
      <div className="h-[35px] flex gap-[2px] pl-[2px] shrink-0">
        <Bar className="w-[408px]">
          <div className="w-[73px] flex items-center shrink-0">
            <Btn name="logo" w="w-[28px]" />
            <span className="text-[15px] text-[#222]">起始</span>
            <span className="ml-[3px]"><Caret /></span>
          </div>
          <Btn name="newf" />
          <Btn name="open" />
          <Btn name="save" state="hover" />
          <Btn name="print" />
          <Sep />
          {many(['cut', 'copy', 'paste', 'del'])}
          <Sep />
          <Btn name="undo" w="w-[27px]" />
          <Sep />
          <Btn name="info" />
          <Chev />
        </Bar>
        <Bar className="w-[315px]">
          {many(['fit', 'gray', 'zoomb', 'zoom', 'rot', 'pan', 'shade', 'cube'])}
          <span className="ml-[3px] mr-[6px]"><Caret /></span>
          <Btn name="csys" w="w-[24px]" />
          <span className="ml-[5px]"><Caret /></span>
          <span className="ml-auto h-full"><Chev /></span>
        </Bar>
        <Bar className="w-[170px]">
          {many(['meas', 'angle', 'sect', 'analy', 'ball'])}
          <Chev />
        </Bar>
        <Bar className="w-[254px]">
          {many(['hand', 'hand2', 'trim1', 'trim2', 'trim3', 'fillet', 'offs', 'blend'])}
          <Chev />
        </Bar>
      </div>

      {/* toolbar row 2 */}
      <div className="h-[36px] flex gap-[2px] pl-[2px] shrink-0">
        <Bar className="w-[197px]">
          <Btn name="mach" state="on" />
          {many(['tool', 'geom', 'meth', 'prog', 'prog2'])}
          <Chev />
        </Bar>
        <Bar className="w-[198px]">
          {many(['cProg', 'cTool', 'square', 'cGeom', 'cMeth', 'cOper'])}
          <Chev />
        </Bar>
        <Bar className="w-[331px]">
          {many(['opA', 'list1', 'list2', 'list3', 'list4', 'ver1', 'ver2'])}
          <Sep />
          {many(['wcs', 'wcs2'])}
          <span className="text-[15px] pb-[2px] text-[#222] ml-[3px] shrink-0">基准</span>
          <span className="ml-auto h-full"><Chev /></span>
        </Bar>
        <Bar className="w-[552px]">
          {many(['line', 'arc', 'circ', 'circ2', 'spline', 'stud'])}
          <div className="w-[29px] shrink-0 text-center text-[24px] leading-none font-bold text-[#222]" style={{ fontFamily: '"Liberation Serif", serif' }}>A</div>
          {many(['plus', 'plusn', 'corner', 'rect'])}
          <Sep />
          {many(['heart', 'curve1', 'curve2', 'surf1', 'surf2', 'surf3', 'xform'])}
          <Chev />
        </Bar>
      </div>

      {/* empty strip */}
      <div className="h-[30px] bg-[#f0f0f0] flex shrink-0 border-b-2 border-[#8f8f8f] box-content">
        <div className="w-[925px] border-r border-[#dcdcdc]" />
      </div>

      {/* main */}
      <div className="flex-1 flex min-h-0">
        <LeftDock />
        <OperationNav />
        <Viewport />
      </div>

      {/* bottom toolbar */}
      <div className="h-[45px] flex shrink-0 gap-[2px]">
        <Bar className="w-[534px] pt-[2px]">
          <div className="w-[60px] h-[29px] ml-[4px] mr-[5px] flex border-2 border-[#b4b4b4] bg-white shrink-0">
            <span className="flex-1 pl-[3px] text-[16px] leading-[25px] text-[#444]">1</span>
            <span className="w-[21px] bg-[#dedede] flex items-center justify-center">
              <svg width="12" height="8" viewBox="0 0 12 8"><P d="M2 2l4 4 4-4" c="#555" w={1.3} /></svg>
            </span>
          </div>
          {many(['layers1', 'layers2', 'layers3', 'layers4', 'layers5'])}
          <Sep />
          <Btn name="csFlash" state="on" />
          {many(['csSq', 'cs', 'csRot', 'csGray', 'csAxis', 'csSave', 'palette', 'swapA', 'swapB'])}
          <Chev />
        </Bar>
        <Bar className="w-[227px] pt-[2px]">
          {many(['gLine', 'gLine2', 'gCurve', 'gFork', 'gCirc', 'gCirc2', 'gPlus'])}
          <Chev />
        </Bar>
      </div>

      {/* cut off status row */}
      <div className="h-[6px] flex shrink-0 overflow-hidden">
        <div className="w-[660px] border-r border-[#bbb]" />
        <div className="w-[200px]" />
        <div className="w-[160px] mt-[3px] h-[1px] bg-[#aaa]" />
        <div className="w-[57px]" />
        <div className="w-[130px] mt-[3px] h-[1px] bg-[#aaa] ml-[1px]" />
      </div>

      <Watermark />
    </div>
  )
}
